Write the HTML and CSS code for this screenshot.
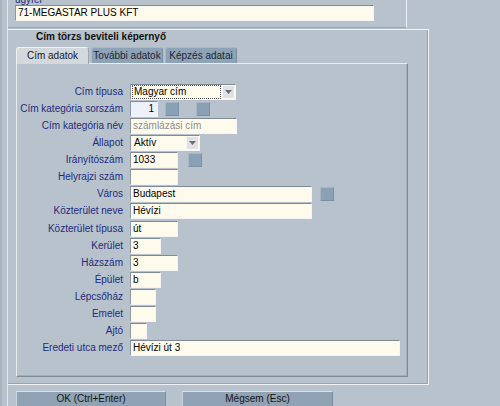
FILE: index.html
```html
<!DOCTYPE html>
<html>
<head>
<meta charset="utf-8">
<link rel="stylesheet" href="styles.css">
</head>
<body>
<div class="frame">
  <div class="top">
    <div class="top-label">ügyfél</div>
    <div class="field top-field">71-MEGASTAR PLUS KFT</div>
  </div>
  <div class="group">
    <div class="group-title">Cím törzs beviteli képernyő</div>
    <div class="tabs">
      <div class="tab active t1">Cím adatok</div>
      <div class="tab t2">További adatok</div>
      <div class="tab t3">Képzés adatai</div>
    </div>
    <div class="panel">
      <div class="form">
        <div class="lbl">Cím típusa</div>
        <div class="ctl"><div class="field select w106"><span class="val focus">Magyar cím</span><span class="arrow"><svg width="7" height="4" viewBox="0 0 7 4"><path d="M0 0H7L3.5 4Z" fill="#6a6f75"/></svg></span></div></div>

        <div class="lbl">Cím kategória sorszám</div>
        <div class="ctl"><div class="field num w28">1</div><div class="sq gap7"></div><div class="sq gap17"></div></div>

        <div class="lbl">Cím kategória név</div>
        <div class="ctl"><div class="field ro w107">számlázási cím</div></div>

        <div class="lbl">Állapot</div>
        <div class="ctl"><div class="field select w70"><span class="val">Aktív</span><span class="arrow"><svg width="7" height="4" viewBox="0 0 7 4"><path d="M0 0H7L3.5 4Z" fill="#6a6f75"/></svg></span></div></div>

        <div class="lbl">Irányítószám</div>
        <div class="ctl"><div class="field w48">1033</div><div class="sq gap10"></div></div>

        <div class="lbl">Helyrajzi szám</div>
        <div class="ctl"><div class="field w48"></div></div>

        <div class="lbl">Város</div>
        <div class="ctl"><div class="field w182">Budapest</div><div class="sq gap8"></div></div>

        <div class="lbl">Közterület neve</div>
        <div class="ctl"><div class="field w182">Hévízi</div></div>

        <div class="lbl">Közterület típusa</div>
        <div class="ctl"><div class="field w48">út</div></div>

        <div class="lbl">Kerület</div>
        <div class="ctl"><div class="field w31">3</div></div>

        <div class="lbl">Házszám</div>
        <div class="ctl"><div class="field w48">3</div></div>

        <div class="lbl">Épület</div>
        <div class="ctl"><div class="field w31">b</div></div>

        <div class="lbl">Lépcsőház</div>
        <div class="ctl"><div class="field w26"></div></div>

        <div class="lbl">Emelet</div>
        <div class="ctl"><div class="field w26"></div></div>

        <div class="lbl">Ajtó</div>
        <div class="ctl"><div class="field w17"></div></div>

        <div class="lbl">Eredeti utca mező</div>
        <div class="ctl"><div class="field w270">Hévízi út 3</div></div>
      </div>
    </div>
  </div>
  <div class="buttons">
    <div class="btn b-ok">OK (Ctrl+Enter)</div>
    <div class="btn b-cancel">Mégsem (Esc)</div>
  </div>
</div>
</body>
</html>
```

FILE: styles.css
```css
html, body {
  margin: 0;
  padding: 0;
}
body {
  width: 500px;
  height: 406px;
  overflow: hidden;
  background: #b8c2cc;
  font-family: "Liberation Sans", Arial, sans-serif;
  font-size: 10px;
  color: #111;
  border-left: 2px solid #aab4be;
  box-sizing: border-box;
}
.frame {
  margin-left: 5px;
  border-left: 1px solid #e3e8ed;
  height: 406px;
  box-sizing: border-box;
}
.top {
  width: 399px;
  height: 28px;
  box-sizing: border-box;
  border-right: 1px solid #eef2f5;
  border-bottom: 1px solid #97a3af;
  padding-left: 7px;
}
.top-label {
  height: 5px;
  line-height: 0;
  color: #1d2b7c;
  overflow: visible;
  font-size: 10px;
}
.top-field {
  width: 359px;
  height: 16px;
  background: #f2f6fd;
  font-size: 10px;
}
.field {
  box-sizing: border-box;
  height: 16px;
  line-height: 14px;
  padding-left: 2px;
  background: #fffbec;
  border-top: 1px solid #7f8a95;
  border-left: 1px solid #8d98a3;
  border-right: 1px solid #f3f5f7;
  border-bottom: 1px solid #f3f5f7;
  white-space: nowrap;
  overflow: hidden;
  color: #000;
  flex: none;
}
.group {
  margin-top: 1px;
  width: 421px;
  height: 356px;
  box-sizing: border-box;
  border-top: 1px solid #eef2f5;
  border-right: 1px solid #eef2f5;
  border-bottom: 1px solid #eef2f5;
  box-shadow: inset -1px -1px 0 #97a3af;
  padding: 0 0 0 8px;
}
.group-title {
  font-weight: bold;
  margin-left: 20px;
  height: 12px;
  line-height: 12px;
  margin-top: 1px;
  color: #111;
}
.tabs {
  display: flex;
  gap: 2px;
  margin-top: 4px;
  height: 16px;
}
.tab {
  box-sizing: border-box;
  height: 16px;
  line-height: 15px;
  text-align: center;
  background: #8ea3b6;
  color: #1c2638;
  border-radius: 3px 3px 0 0;
  border-top: 1px solid #a9b9c7;
  border-left: 1px solid #a9b9c7;
  border-right: 1px solid #7a8fa2;
}
.tab.active {
  background: #d3d8dd;
  color: #1a1a1a;
  border-top: 1px solid #eef1f4;
  border-left: 1px solid #eef1f4;
  border-right: 1px solid #9aa5b0;
  height: 17px;
  position: relative;
  z-index: 1;
}
.t1 { width: 73px; }
.t2 { width: 72px; }
.t3 { width: 72px; }
.panel {
  width: 392px;
  height: 314px;
  box-sizing: border-box;
  border-top: 1px solid #e9edf1;
  border-left: 1px solid #e9edf1;
  border-right: 1px solid #7e8a96;
  border-bottom: 1px solid #7e8a96;
  box-shadow: inset -1px -1px 0 #a3aeb9;
  padding-top: 20px;
}
.form {
  display: grid;
  grid-template-columns: 106px 1fr;
  grid-auto-rows: 16px;
  column-gap: 7px;
  row-gap: 1.07px;
}
.lbl {
  text-align: right;
  line-height: 16px;
  color: #1d2b7c;
  white-space: nowrap;
}
.ctl {
  display: flex;
  align-items: center;
}
.select {
  display: flex;
  align-items: stretch;
  padding-left: 1px;
  padding-right: 1px;
}
.select .val {
  flex: 1;
  padding-left: 1px;
  line-height: 12px;
  margin: 0 1px 0 0;
  border: 1px solid transparent;
}
.select .val.focus {
  border: 1px dotted #555;
}
.arrow {
  width: 11px;
  margin: 1px 0;
  background: #dfe1e4;
  border-left: 1px solid #f4f5f6;
  display: flex;
  align-items: center;
  justify-content: center;
}
.num {
  background: #eef0fc;
  text-align: right;
  padding-right: 3px;
}
.ro {
  color: #8c8c8c;
}
.sq {
  width: 14px;
  height: 14px;
  box-sizing: border-box;
  background: #8aa0b4;
  border: 1px solid #a6b6c4;
  border-right-color: #7b90a3;
  border-bottom-color: #7b90a3;
  flex: none;
}
.gap7 { margin-left: 7px; }
.gap8 { margin-left: 8px; }
.gap10 { margin-left: 10px; }
.gap17 { margin-left: 17px; }
.w17 { width: 17px; }
.w26 { width: 26px; }
.w28 { width: 28px; }
.w31 { width: 31px; }
.w48 { width: 48px; }
.w70 { width: 70px; }
.w106 { width: 106px; }
.w107 { width: 107px; }
.w182 { width: 182px; }
.w270 { width: 270px; }
.buttons {
  display: flex;
  gap: 16px;
  margin-top: 6px;
  padding-left: 8px;
}
.btn {
  box-sizing: border-box;
  height: 20px;
  line-height: 14px;
  text-align: center;
  background: #8fa3b5;
  border-top: 1px solid #dbe3ea;
  border-left: 1px solid #c9d4de;
  border-right: 1px solid #7a8ea0;
  color: #141414;
}
.b-ok { width: 150px; }
.b-cancel { width: 151px; }
```
